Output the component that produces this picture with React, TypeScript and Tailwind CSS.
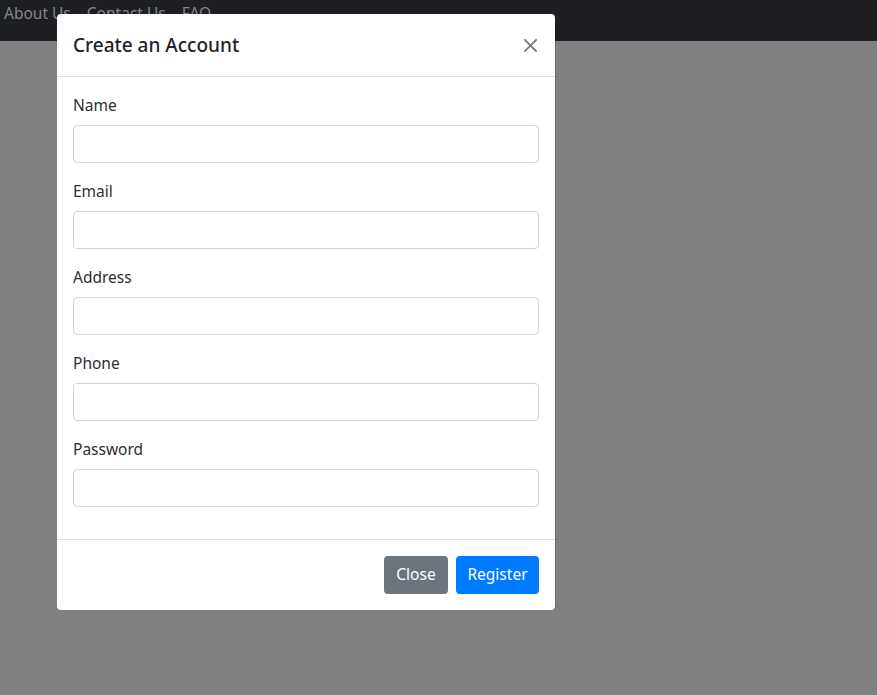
import React from "react";

const fields = ["Name", "Email", "Address", "Phone", "Password"];

export default function App() {
  return (
    <div className="relative w-[877px] h-[695px] bg-[#808080] overflow-hidden" style={{ fontFamily: '"Noto Sans", "Open Sans", sans-serif' }}>
      <nav className="h-[41px] bg-[#1e1f22] flex items-start gap-[16px] pl-[4px] pt-[2px] text-[15.5px] text-[#858688]">
        <span>About Us</span>
        <span>Contact Us</span>
        <span>FAQ</span>
      </nav>
      <div className="absolute left-[57px] top-[14px] w-[498px] bg-white rounded-[4px] text-[#212529] shadow-[1px_0_0_rgba(0,0,0,0.15)]">
        <div className="flex items-center justify-between p-[16px] border-b border-[#dee2e6]">
          <h5 className="text-[19px] leading-[30px] font-medium">Create an Account</h5>
          <button className="w-[14px] h-[14px] mr-[2px] mt-[1px] flex items-center justify-center">
            <svg width="13" height="13" viewBox="0 0 13 13">
              <path d="M1 1L12 12M12 1L1 12" stroke="#7a7a7a" strokeWidth="1.8" strokeLinecap="square" />
            </svg>
          </button>
        </div>
        <div className="p-[16px] flex flex-col">
          {fields.map((f) => (
            <div key={f} className="mb-[16px]">
              <label className="block text-[15.5px] leading-[24px] mb-[8px] text-[#2b2f33]">{f}</label>
              <input className="block w-full h-[38px] border border-[#ced4da] rounded-[4px] bg-white" type={f === "Password" ? "password" : "text"} />
            </div>
          ))}
        </div>
        <div className="flex justify-end items-center gap-[8px] px-[16px] py-[16px] border-t border-[#dee2e6]">
          <button className="h-[38px] w-[64px] rounded-[4px] bg-[#6c757d] text-white text-[15.5px]">Close</button>
          <button className="h-[38px] w-[83px] rounded-[4px] bg-[#007bff] text-white text-[15.5px]">Register</button>
        </div>
      </div>
    </div>
  );
}
